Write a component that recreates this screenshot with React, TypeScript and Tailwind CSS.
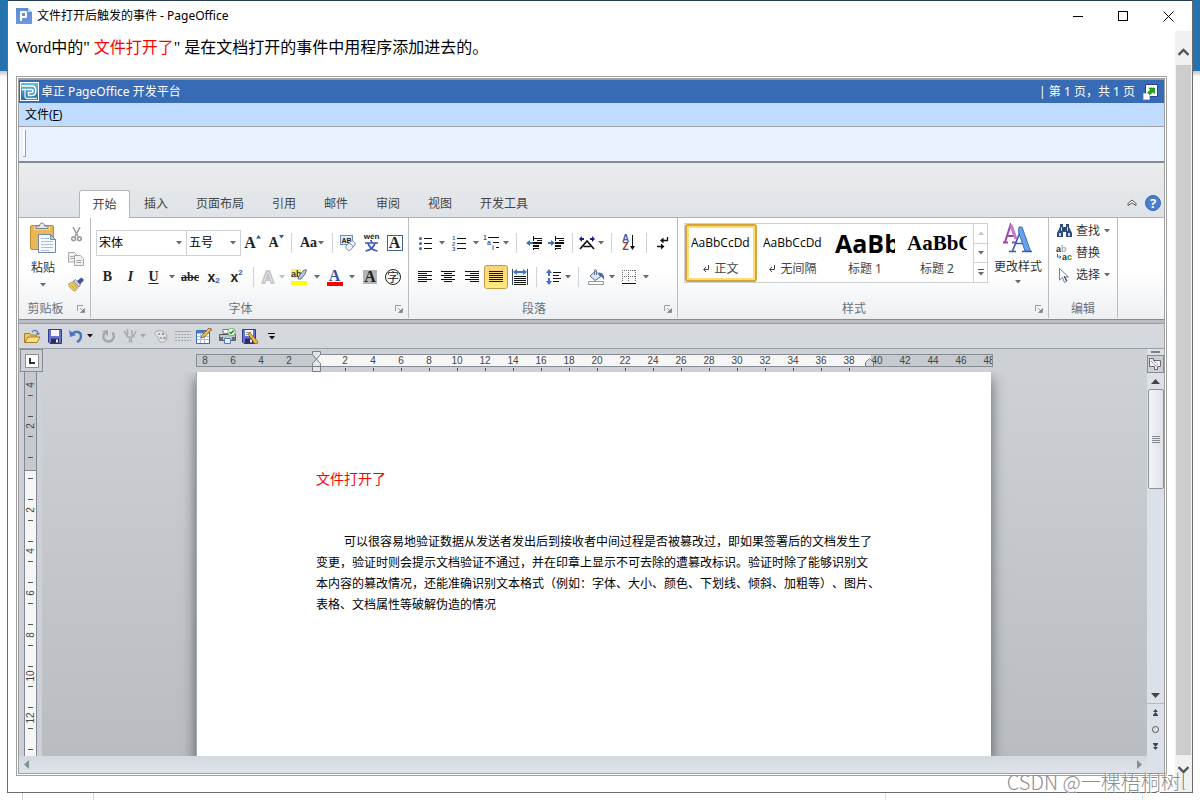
import type { ReactNode } from "react";

const ui = "font-['Noto_Sans','Noto_Sans_CJK_SC',sans-serif]";

/* ---------- small building blocks ---------- */

function Caret({ color = "#666a70" }: { color?: string }) {
  return (
    <svg width="6" height="4" viewBox="0 0 6 4" aria-hidden="true" className="shrink-0">
      <path d="M0 0h6L3 3.5z" fill={color} />
    </svg>
  );
}

function Tool({ label, w, children, className = "" }: { label: string; w: string; children: ReactNode; className?: string }) {
  return (
    <button type="button" aria-label={label} className={`flex h-6 shrink-0 items-center justify-center text-[#222] ${w} ${className}`}>
      {children}
    </button>
  );
}

function Drop({ label, w, color }: { label: string; w: string; color?: string }) {
  return (
    <Tool label={label} w={w}>
      <Caret color={color} />
    </Tool>
  );
}

function Sep({ w }: { w: string }) {
  return (
    <span className={`flex shrink-0 justify-center ${w}`}>
      <span className="h-5 w-px bg-[#cfd2d6]" />
    </span>
  );
}

function Group({ title, w, launcher = true, children }: { title: string; w: string; launcher?: boolean; children: ReactNode }) {
  return (
    <section aria-label={title} className={`flex shrink-0 flex-col border-r border-[#b9bdc2] ${w}`}>
      <div className="flex-1">{children}</div>
      <div className="flex h-[18px] items-center text-xs text-[#6b717c]">
        <span className="flex-1 text-center leading-[18px]">{title}</span>
        {launcher && (
          <button type="button" aria-label={`${title}设置`} className="flex w-[18px] justify-center">
            <svg width="8" height="8" viewBox="0 0 8 8">
              <path d="M.5 6V.5H6" fill="none" stroke="#9a9ea4" />
              <path d="M3 3l2.5 2.5M7.5 3.5v4h-4z" fill="#85898f" stroke="#85898f" strokeWidth=".8" />
            </svg>
          </button>
        )}
      </div>
    </section>
  );
}

/* ---------- icons ---------- */

const AppIcon = () => (
  <svg width="16" height="16" viewBox="0 0 16 16" className="shrink-0">
    <defs>
      <linearGradient id="app" x2="0" y2="1">
        <stop stopColor="#5b8fd0" />
        <stop offset="1" stopColor="#6e96df" />
      </linearGradient>
    </defs>
    <path d="M0 0h12l4 4v12H0z" fill="url(#app)" />
    <path d="M12 0v4h4z" fill="#c5d8f2" />
    <path d="M5 13V4h5v5H5" fill="none" stroke="#fff" strokeWidth="2" strokeLinejoin="round" />
  </svg>
);

const Logo = () => (
  <svg width="19" height="19" viewBox="0 0 19 19" className="shrink-0">
    <defs>
      <linearGradient id="logo" x2="0" y2="1">
        <stop stopColor="#6cc0dc" />
        <stop offset="1" stopColor="#1a6ba5" />
      </linearGradient>
    </defs>
    <path fill="#fff" d="M0 0h19v19H0z" />
    <path fill="url(#logo)" d="M1 1h17v17H1z" />
    <path d="M1.500 4h10.500c5 0 5 9.500 0 9.500H8.500V10.500H12c1.500 0 1.500-3 0-3H2" fill="none" stroke="#fff" strokeWidth="1.500" />
    <path d="M5 8v6c0 2 1 2.500 2.500 2.500H17" fill="none" stroke="#e2f2fa" strokeWidth="1.300" />
  </svg>
);

const Expand = () => (
  <svg width="15" height="16" viewBox="0 0 15 16">
    <path d="M2.500.500h12v12h-12z" fill="#fff" stroke="#2b3f9a" />
    <path d="M.500 9.500h6v6h-6z" fill="#fff" stroke="#c7c7c7" />
    <path d="M6 4h5.500v5.500L9.800 8 7 10.500 4.800 8.500 7.500 5.800z" fill="#12b012" stroke="#0a6d0a" strokeWidth=".6" />
  </svg>
);

const Paste = () => (
  <svg width="28" height="32" viewBox="0 0 28 32">
    <rect x="1.500" y="3.500" width="23" height="24" rx="1.500" fill="#e9b755" stroke="#c08a31" />
    <path d="M5 4h16v4H5z" fill="#f6d592" />
    <path d="M7 6.500V4h3.500c0-4 5-4 5 0H19v2.500z" fill="#e6e9ed" stroke="#777d86" />
    <path d="M9.500 12.500h12l5 5v13h-17z" fill="#f7fafe" stroke="#7187a8" />
    <path d="M21.500 12.500v5h5z" fill="#b9cbe4" stroke="#7187a8" />
    <path d="M12 16.500h8M12 19.500h12M12 22.500h12M12 25.500h12M12 28.500h8" stroke="#a9c0dd" />
  </svg>
);

const Cut = () => (
  <svg width="11" height="15" viewBox="0 0 11 15" fill="none" stroke="#9a9da1" strokeWidth="1.600">
    <path d="M2 0l5 9.500M9 0L4 9.500" />
    <circle cx="2.600" cy="11.800" r="1.900" />
    <circle cx="8.400" cy="11.800" r="1.900" />
  </svg>
);

const Copy = () => (
  <svg width="16" height="14" viewBox="0 0 16 14" fill="#f1f1f2" stroke="#a5a7aa">
    <path d="M.5.500h6l2.500 2.500v7H.500z" />
    <path d="M6.500 3.500h6l3 3v7h-9z" />
    <path d="M2 4.500h4M2 6.500h4M8.500 8.500h5M8.500 10.500h5" />
  </svg>
);

const Brush = () => (
  <svg width="16" height="15" viewBox="0 0 16 15">
    <path d="M.500 7l5.500-3 5 5-3.500 5C6 14.500 1 11 .500 7z" fill="#edc964" stroke="#a98837" strokeWidth=".7" />
    <path d="M3 8l4 4M5 6l4 5" stroke="#b4923c" strokeWidth=".8" />
    <path d="M5.500 4l2-1.500L12.500 8 11 10z" fill="#d6d9df" stroke="#666d7c" strokeWidth=".7" />
    <path d="M9 4l4.500-3.500L16 3l-4 4.500z" fill="#43509b" />
  </svg>
);

const Eraser = () => (
  <svg width="16" height="16" viewBox="0 0 16 16">
    <rect x=".5" y=".500" width="12" height="9" fill="#dfe9f7" stroke="#6d8fc0" />
    <text x="1.500" y="7.500" fontSize="7" fontWeight="700" fill="#222" fontFamily="Liberation Sans">AB</text>
    <path d="M6 11l5-5c1.500-1 5 1.500 4 4l-4.500 5c-2 1.500-6-1.500-4.500-4z" fill="#eef3fb" stroke="#7489ad" />
    <path d="M8.500 8.500c2.500 0 4 1.500 4.500 3.500" fill="none" stroke="#7489ad" />
  </svg>
);

const Pinyin = () => (
  <span className="flex flex-col items-center">
    <span className="font-['Liberation_Sans'] text-[8px] leading-[6px] font-bold">wén</span>
    <svg width="13" height="12" viewBox="0 0 13 12" fill="none" stroke="#3d55b8" strokeWidth="1.700">
      <path d="M5.500 0l1.500 2M0 3h13M3 3c1 4 4 7 9.500 8M10 3C9 7 6 10 .500 11" />
    </svg>
  </span>
);

const Highlight = () => (
  <svg width="16" height="16" viewBox="0 0 16 16">
    <path fill="#f3f36a" d="M0 0h10v9H0z" />
    <text x="0" y="7.500" fontSize="9" fontWeight="700" fill="#333" fontFamily="Liberation Sans">ab</text>
    <path d="M7 10l1-3 5-6h2.500L14 5l-4 5z" fill="#b8c9e4" stroke="#5d6f91" />
    <path fill="#ffff00" d="M0 12h16v4H0z" />
  </svg>
);

const ListIcon = ({ kind }: { kind: "dot" | "num" | "multi" }) => (
  <svg width="16" height="16" viewBox="0 0 16 16">
    {kind === "dot" && (
      <>
        <path d="M6 3.500h8M6 8.500h8M6 13.500h8" stroke="#111" />
        <g fill="#3a66ac">
          <circle cx="2.500" cy="3.500" r="1.500" />
          <circle cx="2.500" cy="8.500" r="1.500" />
          <circle cx="2.500" cy="13.500" r="1.500" />
        </g>
      </>
    )}
    {kind === "num" && (
      <>
        <path d="M6 3.500h9M6 8.500h9M6 13.500h9" stroke="#111" />
        <g fill="#3a66ac" fontSize="6" fontWeight="700" fontFamily="Liberation Sans">
          <text x="1" y="5">1</text>
          <text x="1" y="10.500">2</text>
          <text x="1" y="16">3</text>
        </g>
      </>
    )}
    {kind === "multi" && (
      <>
        <path d="M5 2.500h11M10 7.500h6M13 12.500h3" stroke="#111" />
        <g fill="#3a66ac" fontSize="7" fontWeight="700" fontFamily="Liberation Sans">
          <text x="0" y="5">1</text>
          <text x="4" y="10">a</text>
          <text x="9" y="15">i</text>
        </g>
      </>
    )}
  </svg>
);

const Indent = ({ out = false }: { out?: boolean }) => (
  <svg width="16" height="15" viewBox="0 0 16 15">
    <path d="M7 2.500h9M11 4.500h5M7 12.500h6" stroke="#111" />
    <path d="M7 7h9M7 10h6" stroke="#111" strokeWidth="2" />
    <path d="M7.500 0v15" stroke="#111" strokeDasharray="2 1" />
    {out ? <path d="M0 7l4-3v2h3v2H4v2z" fill="#3f72c4" /> : <path d="M7 7L3 4v2H0v2h3v2z" fill="#3f72c4" />}
  </svg>
);

const Scale = () => (
  <svg width="16" height="14" viewBox="0 0 16 14">
    <path d="M1 13L8 5l7 8M4.500 10.500h7" fill="none" stroke="#111" strokeWidth="1.700" />
    <path d="M0 3l3-3v2h2v2H3v2zM16 3l-3-3v2h-2v2h2v2z" fill="#1a1f86" />
  </svg>
);

const Sort = () => (
  <span className="flex items-center gap-px">
    <span className="flex flex-col items-center font-['Liberation_Sans'] text-[10px] leading-2 font-bold">
      <span className="text-[#3a5fa8]">A</span>
      <span className="text-[#943838]">Z</span>
    </span>
    <svg width="6" height="16" viewBox="0 0 6 16">
      <path d="M2.500 0v12" stroke="#111" />
      <path d="M0 11h5l-2.500 4z" fill="#111" />
    </svg>
  </span>
);

const Marks = () => (
  <svg width="12" height="14" viewBox="0 0 12 14" fill="none" stroke="#111">
    <path d="M10.500 1v3.500H5M0 10.500h5" strokeWidth="1.300" />
    <path d="M6.500 1.500L3 4.500 6.500 7.500zM4 7.500l3.500 3L4 13.500z" fill="#111" stroke="none" />
  </svg>
);

const alignPaths = {
  left: "M0 1.500h14M0 3.500h9M0 5.500h14M0 7.500h9M0 9.500h14M0 11.500h9",
  center: "M0 1.500h14M3 3.500h8M0 5.500h14M3 7.500h8M0 9.500h14M3 11.500h8",
  right: "M0 1.500h14M5 3.500h9M0 5.500h14M5 7.500h9M0 9.500h14M5 11.500h9",
  full: "M0 1.500h14M0 3.500h14M0 5.500h14M0 7.500h14M0 9.500h14M0 11.500h14",
};

const Align = ({ kind }: { kind: keyof typeof alignPaths }) => (
  <svg width="14" height="14" viewBox="0 0 14 14">
    <path d={alignPaths[kind]} stroke="#111" />
  </svg>
);

const Distribute = () => (
  <svg width="16" height="16" viewBox="0 0 16 16">
    <path d="M.5 0v16M15.500 0v16" stroke="#3a4a66" />
    <path d="M1 3l4-3v2h6V0l4 3-4 3V4H5v2z" fill="#3f72c4" />
    <path d="M2 7.500h12M2 9.500h12M2 11.500h12M2 13.500h12M2 15.500h12" stroke="#111" />
  </svg>
);

const Spacing = () => (
  <svg width="16" height="16" viewBox="0 0 16 16">
    <path d="M3 0l3 4H4v8h2l-3 4-3-4h2V4H0z" fill="#3f72c4" />
    <path d="M0 7h6v2H0z" fill="#fff" />
    <path d="M7 3.500h8M7 6.500h6M7 9.500h8M7 12.500h6" stroke="#111" />
  </svg>
);

const Bucket = () => (
  <svg width="16" height="16" viewBox="0 0 16 16">
    <path d="M2 7l5.500-5L13 7.500 7 11.500z" fill="#dbe6f5" stroke="#5d7396" />
    <path d="M6.500 6V1.500c0-1.500 2-1.500 2 .500v4" fill="none" stroke="#5d7396" />
    <path d="M10.500 3.500C15 3.500 17 7 15.500 11c-1-3-2-4-4-4z" fill="#3c66b0" />
    <path d="M.5 12.500h15v3H.500z" fill="#fff" stroke="#999" />
  </svg>
);

const Borders = () => (
  <svg width="14" height="14" viewBox="0 0 14 14">
    <path d="M0 .500h14M.500 0v12M13.500 0v12M6.500 0v12M0 6.500h14" fill="none" stroke="#666" strokeDasharray="1 1" />
    <path d="M0 13.500h14" stroke="#111" />
  </svg>
);

const BigA = () => (
  <svg width="30" height="30" viewBox="0 0 30 30">
    <path d="M0 19.500h5M9 19.500h5M2 19L7.500 2 12 14M4 13h7" fill="none" stroke="#a045a8" strokeWidth="2" />
    <path d="M8 2l5 14" stroke="#c77acb" strokeWidth="3" />
    <path d="M6 28.500h7M19 28.500h10M9.500 28L18 7M12.500 20.500h10" fill="none" stroke="#2f62ad" strokeWidth="1.600" />
    <path d="M16 4h3l8.500 24h-5.500L15.500 9z" fill="#6aa2e8" stroke="#2f62ad" strokeWidth=".9" />
  </svg>
);

const Find = () => (
  <svg width="15" height="14" viewBox="0 0 15 14">
    <path d="M3 0h3v3h3V0h3v3l3 6v4H9V8H6v5H0V9l3-6z" fill="#2d4a7c" />
    <path d="M2 9h2v3H2zM11 9h2v3h-2zM4 3h1v4H4zM10 3h1v4h-1z" fill="#c8d8f0" />
  </svg>
);

const Replace = () => (
  <svg width="16" height="16" viewBox="0 0 16 16" fontFamily="Liberation Sans" fontWeight="700" fontSize="9">
    <text x="0" y="7" fill="#333">a</text>
    <text x="5" y="7" fill="#aaa">b</text>
    <text x="6" y="15" fill="#333">a</text>
    <text x="11" y="15" fill="#248a24">c</text>
    <path d="M1.500 9v3H5M3.500 10.500L5 12l-1.500 1.500" fill="none" stroke="#3b66b5" />
  </svg>
);

const Pointer = () => (
  <svg width="10" height="15" viewBox="0 0 10 15">
    <path d="M.5.500v11.500l3-2.500 2 5 2-1-2-4.500h4z" fill="#fff" stroke="#6181b4" />
    <path d="M5 8l3 5" stroke="#30353d" />
  </svg>
);

const Open = () => (
  <svg width="17" height="15" viewBox="0 0 17 15">
    <path d="M.5 13.500V4.500h5l1 1.500h6v7.500z" fill="#f0c75a" stroke="#a67c24" />
    <path d="M1 13.500L4 8h12l-3 5.500z" fill="#ffe08a" stroke="#a67c24" />
    <path d="M8 3c2-2.500 5-2 6 1" fill="none" stroke="#4d7abc" strokeWidth="1.300" />
    <path d="M12 4h4l-2 2.500z" fill="#4d7abc" />
  </svg>
);

const Floppy = ({ pen = false }: { pen?: boolean }) => (
  <svg width="17" height="15" viewBox="0 0 17 15">
    <path d="M1.500 .500h13v14H3l-1.500-1.500z" fill="#6a74cc" stroke="#34398c" />
    <path d="M4 1h8v6H4z" fill="#f4f7fd" />
    <path d="M4 9.500h8v5H4z" fill="#2a2e58" />
    <path d="M9 10.500h2v3H9z" fill="#eef" />
    {pen && (
      <>
        <path d="M5 3.500h5M5 5.500h4" stroke="#999" />
        <path d="M7 5l2-1 7.500 8v2.500l-2.500 .500z" fill="#f0b73c" stroke="#80571c" strokeWidth=".7" />
      </>
    )}
  </svg>
);

const Undo = () => (
  <svg width="14" height="14" viewBox="0 0 14 14">
    <path d="M3 5c4-4 9-2 9 2 0 3-2 5-4 6" fill="none" stroke="#4675c4" strokeWidth="2.400" />
    <path d="M0 1l1 7 6-2z" fill="#4675c4" />
  </svg>
);

const Redo = () => (
  <svg width="13" height="13" viewBox="0 0 13 13">
    <path d="M2.500 3c-2.500 4-.5 8.500 4 8.500s7-5 4-9" fill="none" stroke="#a3a6aa" strokeWidth="2.400" />
    <path d="M6 0v6L0 1z" fill="#a3a6aa" />
  </svg>
);

const Brushes = () => (
  <svg width="14" height="14" viewBox="0 0 14 14" fill="none" stroke="#a8abaf" strokeWidth="1.600">
    <path d="M1 2l4 6M4.500 0v6M9 1v6M13 2l-3 6" />
    <path d="M3.500 8h3v5.500M8.500 13.500V8h3" fill="#e9e9ea" />
  </svg>
);

const Palette = () => (
  <svg width="14" height="13" viewBox="0 0 14 13">
    <path d="M1 2c5-3 12-1 12 5s-7 6-8 4 1-3-1-4-4-3-3-5z" fill="#e3e3e4" stroke="#a9a9ab" />
    <g fill="#909296">
      <circle cx="5" cy="4" r="1" />
      <circle cx="9" cy="4" r="1.200" />
      <circle cx="10.500" cy="8" r="1.200" />
      <circle cx="7" cy="8" r="1" />
    </g>
  </svg>
);

const Dashes = () => (
  <svg width="16" height="12" viewBox="0 0 16 12">
    <path d="M0 1.500h16" stroke="#a5a8ad" />
    <path d="M0 4.500h16M0 7.500h16M0 10.500h16" stroke="#a5a8ad" strokeDasharray="2 1" />
  </svg>
);

const TablePen = () => (
  <svg width="17" height="16" viewBox="0 0 17 16">
    <path d="M.5 2.500h13v13H.500z" fill="#fff" stroke="#3f6cb0" />
    <path fill="#4d7cc4" d="M1 3h12v2.500H1z" />
    <path d="M1 8.500h12M1 11.500h12M4.500 5v10M8.500 5v10" stroke="#a6bfe2" />
    <path d="M5 10l1-3 7-7 2.500 2L8.500 9z" fill="#e8b64f" stroke="#7b5a22" strokeWidth=".8" />
    <path d="M13 0l2.500 2 .5-1-1.500-1z" fill="#c65a50" />
  </svg>
);

const Printer = () => (
  <svg width="17" height="16" viewBox="0 0 17 16">
    <path d="M4 5.500V1.500h8v4z" fill="#fff" stroke="#777" />
    <path d="M.500 6.500h16v6H.500z" fill="#c0c4c9" stroke="#5d6167" />
    <path d="M1 9h3v3H1zM13 9h3v3h-3z" fill="#6a6f75" />
    <path d="M5.500 10.500h6v5h-6z" fill="#e9f3ff" stroke="#4e7fbb" />
    <circle cx="12.500" cy="4" r="3.800" fill="#e8f5e6" stroke="#5f9c5c" strokeWidth=".8" />
    <path d="M10.500 4l1.500 1.500L14.500 2.500" fill="none" stroke="#259025" strokeWidth="1.500" />
  </svg>
);

/* ---------- ribbon ---------- */

const tabs = ["插入", "页面布局", "引用", "邮件", "审阅", "视图", "开发工具"];

function Combo({ label, value, w }: { label: string; value: string; w: string }) {
  return (
    <span className={`relative flex h-[26px] shrink-0 items-center border border-[#cdd0d4] bg-white ${w}`}>
      <select aria-label={label} defaultValue={value} className="h-full w-full appearance-none bg-transparent pl-0.5 text-xs text-black outline-none">
        <option>{value}</option>
      </select>
      <span className="pointer-events-none absolute right-1">
        <Caret />
      </span>
    </span>
  );
}

function ClipboardGroup() {
  return (
    <Group title="剪贴板" w="w-[72px]">
      <div className="flex">
        <button type="button" className="flex w-12 flex-col items-center pt-1 text-xs text-[#333]">
          <Paste />
          <span className="mt-[5px] leading-[18px]">粘贴</span>
          <span className="mt-1.5">
            <Caret />
          </span>
        </button>
        <div className="flex w-[18px] flex-col items-center gap-px pt-1">
          <Tool label="剪切" w="w-4">
            <Cut />
          </Tool>
          <Tool label="复制" w="w-4">
            <Copy />
          </Tool>
          <Tool label="格式刷" w="w-4">
            <Brush />
          </Tool>
        </div>
      </div>
    </Group>
  );
}

function FontGroup() {
  return (
    <Group title="字体" w="w-[318px]">
      <div className="mt-3 flex h-[26px] items-center pl-[5px] font-['Liberation_Serif'] font-bold">
        <span className={`flex font-normal ${ui}`}>
          <Combo label="字体" value="宋体" w="w-[91px]" />
          <Combo label="字号" value="五号" w="-ml-px w-[55px]" />
        </span>
        <Tool label="增大字体" w="w-[23px]">
          <span className="text-base leading-6">A</span>
          <svg width="5" height="16" viewBox="0 0 5 16"><path d="M0 3.500h5L2.500 0z" fill="#31599c" /></svg>
        </Tool>
        <Tool label="缩小字体" w="w-6">
          <span className="text-sm leading-6">A</span>
          <svg width="5" height="16" viewBox="0 0 5 16"><path d="M0 0h5L2.500 3.500z" fill="#31599c" /></svg>
        </Tool>
        <Sep w="w-[7px]" />
        <Tool label="更改大小写" w="w-[34px]" className="gap-px text-sm">
          Aa
          <Caret />
        </Tool>
        <Sep w="w-[7px]" />
        <Tool label="清除格式" w="w-6">
          <Eraser />
        </Tool>
        <Tool label="拼音指南" w="w-[23px]">
          <Pinyin />
        </Tool>
        <Tool label="字符边框" w="w-[23px]">
          <span className="h-4 w-4 border border-[#43618f] text-center text-base leading-[14px]">A</span>
        </Tool>
      </div>
      <div className="mt-[9px] flex items-center pl-[5px] font-['Liberation_Serif'] text-sm font-bold">
        <Tool label="加粗" w="w-[23px]">B</Tool>
        <Tool label="倾斜" w="w-[23px]" className="italic">I</Tool>
        <Tool label="下划线" w="w-[23px]">
          <span className="underline underline-offset-2">U</span>
        </Tool>
        <Drop label="下划线样式" w="w-[13px]" />
        <Tool label="删除线" w="w-6" className="text-xs line-through">abc</Tool>
        <Tool label="下标" w="w-[23px]" className="font-['Liberation_Sans']">
          x<span className="mt-2 text-[8px] text-[#31599c]">2</span>
        </Tool>
        <Tool label="上标" w="w-[23px]" className="font-['Liberation_Sans']">
          x<span className="mb-2 text-[8px] text-[#31599c]">2</span>
        </Tool>
        <Sep w="w-2.5" />
        <Tool label="文本效果" w="w-5">
          <svg width="18" height="18" viewBox="0 0 18 18">
            <text x="9" y="15" textAnchor="middle" fontSize="17" fontFamily="Liberation Sans" fill="#fff" stroke="#c3c3c8" strokeWidth="1.500">A</text>
          </svg>
        </Tool>
        <Drop label="文本效果选项" w="w-2" color="#bcbec2" />
        <Tool label="突出显示" w="w-[26px]">
          <Highlight />
        </Tool>
        <Drop label="突出显示颜色" w="w-[9px]" />
        <Tool label="字体颜色" w="w-[27px]">
          <span className="w-4 border-b-4 border-[#fe0000] text-center text-base leading-[13px] text-[#31599c]">A</span>
        </Tool>
        <Drop label="选择字体颜色" w="w-2" />
        <Tool label="字符底纹" w="w-7">
          <span className="h-3.5 w-3.5 bg-[#b5b5b5] text-center text-base leading-[14px]">A</span>
        </Tool>
        <Tool label="带圈字符" w="w-[18px]">
          <span className="h-4 w-4 rounded-full border border-[#222] text-center font-['Noto_Sans_CJK_SC'] text-xs leading-[14px] font-normal">字</span>
        </Tool>
      </div>
    </Group>
  );
}

function ParagraphGroup() {
  return (
    <Group title="段落" w="w-[269px]">
      <div className="mt-3 flex h-[26px] items-center pl-[5px]">
        <Tool label="项目符号" w="w-6"><ListIcon kind="dot" /></Tool>
        <Drop label="项目符号库" w="w-2" />
        <Tool label="编号" w="w-[26px]"><ListIcon kind="num" /></Tool>
        <Drop label="编号库" w="w-2" />
        <Tool label="多级列表" w="w-[22px]"><ListIcon kind="multi" /></Tool>
        <Drop label="列表库" w="w-2" />
        <Sep w="w-[13px]" />
        <Tool label="减少缩进量" w="w-[22px]"><Indent out /></Tool>
        <Tool label="增加缩进量" w="w-[22px]"><Indent /></Tool>
        <Sep w="w-2.5" />
        <Tool label="中文版式" w="w-5"><Scale /></Tool>
        <Drop label="中文版式选项" w="w-2" />
        <Sep w="w-[13px]" />
        <Tool label="排序" w="w-[22px]"><Sort /></Tool>
        <Sep w="w-3" />
        <Tool label="编辑标记" w="w-[22px]"><Marks /></Tool>
      </div>
      <div className="mt-[9px] flex items-center pl-[5px]">
        <Tool label="左对齐" w="w-[22px]"><Align kind="left" /></Tool>
        <Tool label="居中" w="w-6"><Align kind="center" /></Tool>
        <Tool label="右对齐" w="w-6"><Align kind="right" /></Tool>
        <Tool label="两端对齐" w="w-6" className="rounded-[3px] border border-[#c29b45] bg-gradient-to-b from-[#fcd378] to-[#ffea7d]"><Align kind="full" /></Tool>
        <Tool label="分散对齐" w="w-6"><Distribute /></Tool>
        <Sep w="w-2" />
        <Tool label="行距" w="w-5" className="ml-1"><Spacing /></Tool>
        <Drop label="行距选项" w="w-2" />
        <Sep w="w-3" />
        <Tool label="底纹" w="w-6"><Bucket /></Tool>
        <Drop label="底纹颜色" w="w-2" />
        <Tool label="边框" w="w-[26px]"><Borders /></Tool>
        <Drop label="边框选项" w="w-2" />
      </div>
    </Group>
  );
}

const styles = [
  { name: "正文", mark: true, sample: "AaBbCcDd", look: "text-xs font-['Open_Sans']" },
  { name: "无间隔", mark: true, sample: "AaBbCcDd", look: "text-xs font-['Open_Sans']" },
  { name: "标题 1", mark: false, sample: "AaBb", look: "text-[25px] font-bold font-['Open_Sans']" },
  { name: "标题 2", mark: false, sample: "AaBbC", look: "text-[21px] font-bold font-['Liberation_Serif']" },
];

function StylesGroup() {
  return (
    <Group title="样式" w="w-[371px]">
      <div className="flex pt-[5px] pl-1.5">
        <div className="flex h-[60px] border border-[#cdd0d4] bg-white">
          {styles.map((s, i) => (
            <button
              key={s.name}
              type="button"
              aria-pressed={i === 0}
              className={`flex w-[72px] flex-col items-center text-xs text-[#444] ${
                i === 0 ? "rounded-[3px] border-2 border-[#d8a33a] outline-2 -outline-offset-4 outline-[#ffdd75]" : "border-2 border-transparent"
              }`}
            >
              <span className={`flex h-[34px] w-[60px] items-center overflow-hidden leading-8 text-black ${s.look}`}>{s.sample}</span>
              <span className="flex items-center gap-1 leading-[18px] whitespace-nowrap">
                {s.mark && (
                  <svg width="7" height="8" viewBox="0 0 7 8">
                    <path d="M5.500 0v4.500H1M3 2L.700 4.500 3 7" fill="none" stroke="#444" />
                  </svg>
                )}
                {s.name}
              </span>
            </button>
          ))}
          <div className="flex w-3.5 flex-col divide-y divide-[#cdd0d4] border-l border-[#cdd0d4]">
            <button type="button" aria-label="上一行" className="flex flex-1 items-center justify-center">
              <svg width="6" height="4" viewBox="0 0 6 4"><path d="M0 4h6L3 .500z" fill="#c4c6c9" /></svg>
            </button>
            <button type="button" aria-label="下一行" className="flex flex-1 items-center justify-center">
              <Caret />
            </button>
            <button type="button" aria-label="其他" className="flex flex-1 flex-col items-center justify-center gap-0.5">
              <span className="h-px w-1.5 bg-[#555]" />
              <Caret />
            </button>
          </div>
        </div>
        <button type="button" className="ml-0.5 flex w-14 flex-col items-center text-xs whitespace-nowrap text-[#333]">
          <BigA />
          <span className="mt-[5px] leading-[18px]">更改样式</span>
          <span className="mt-1">
            <Caret />
          </span>
        </button>
      </div>
    </Group>
  );
}

const edits = [
  { name: "查找", icon: <Find />, drop: true },
  { name: "替换", icon: <Replace />, drop: false },
  { name: "选择", icon: <Pointer />, drop: true },
];

function EditGroup() {
  return (
    <Group title="编辑" w="w-[69px]" launcher={false}>
      <div className="flex flex-col pt-0.5 pl-[7px]">
        {edits.map((e) => (
          <button key={e.name} type="button" className="flex h-[22px] items-center text-xs text-[#333]">
            <span className="flex w-[18px] justify-center pr-0.5">{e.icon}</span>
            <span className="mr-1 ml-0.5">{e.name}</span>
            {e.drop && <Caret />}
          </button>
        ))}
      </div>
    </Group>
  );
}

function Ribbon() {
  return (
    <>
      <div className="flex h-[55px] shrink-0 items-end border-b border-[#adb1b7] bg-gradient-to-b from-[#ebecee] to-[#dfe3e7] pl-[60px] text-xs text-[#444]">
        <nav className="-mb-px flex h-7">
          <button type="button" className="w-[51px] rounded-t-[3px] border border-b-0 border-[#b2b6bb] bg-white">开始</button>
          {tabs.map((t) => (
            <button key={t} type="button" className="px-3.5">{t}</button>
          ))}
        </nav>
        <div className="ml-auto flex h-7 items-center gap-2 pr-[3px]">
          <button type="button" aria-label="最小化功能区">
            <svg width="10" height="8" viewBox="0 0 10 8">
              <path d="M1 4.500L5 1l4 3.500v2L5 4 1 6.500z" fill="#fff" stroke="#555" />
            </svg>
          </button>
          <button type="button" aria-label="帮助" className="h-4 w-4 rounded-full border border-[#3a66b5] bg-[#4a7dcb] text-[13px] leading-[14px] font-bold text-white">?</button>
        </div>
      </div>
      <div className="flex h-[101px] shrink-0 overflow-hidden bg-gradient-to-b from-white via-white to-[#edeff1] pb-px">
        <ClipboardGroup />
        <FontGroup />
        <ParagraphGroup />
        <StylesGroup />
        <EditGroup />
      </div>
      <div className="h-[5px] shrink-0 border-y border-t-[#858a91] border-b-[#969da6] bg-[#b9bdc3]" />
    </>
  );
}

function QuickAccess() {
  return (
    <div className="flex h-[25px] shrink-0 items-center border-b border-[#989fa9] bg-[#d4d8dd] pl-0.5">
      <Tool label="打开" w="w-[23px]"><Open /></Tool>
      <Tool label="保存" w="w-[23px]"><Floppy /></Tool>
      <Tool label="撤消" w="w-[18px]"><Undo /></Tool>
      <Drop label="撤消列表" w="w-2.5" color="#111" />
      <Tool label="重复" w="w-[27px]"><Redo /></Tool>
      <Tool label="画笔" w="w-4"><Brushes /></Tool>
      <Drop label="画笔选项" w="w-2.5" color="#a3a6aa" />
      <Tool label="主题颜色" w="w-[26px]"><Palette /></Tool>
      <Tool label="虚框" w="w-[18px]"><Dashes /></Tool>
      <Tool label="绘制表格" w="w-[25px]"><TablePen /></Tool>
      <Tool label="打印" w="w-[21px]"><Printer /></Tool>
      <Tool label="另存为" w="w-[23px]"><Floppy pen /></Tool>
      <Tool label="自定义快速访问工具栏" w="w-[21px]" className="flex-col gap-0.5">
        <span className="h-px w-[7px] bg-black" />
        <Caret color="#111" />
      </Tool>
    </div>
  );
}

/* ---------- document area ---------- */

const hMarks = Array.from({ length: 29 }, (_, i) => i * 2 - 8);
const vMarks = Array.from({ length: 9 }, (_, i) => i * 2 - 4);

function HorizontalRuler() {
  return (
    <div className="flex h-[23px] shrink-0 bg-[#cdd0d5] pr-px">
      <button type="button" aria-label="制表符" className="ml-px flex h-[23px] w-[23px] items-center justify-center border border-[#868c94]">
        <span className="flex h-3.5 w-3.5 items-center justify-center border border-[#8a9099] bg-white">
          <span className="h-1.5 w-1.5 border-b-2 border-l-2 border-[#333]" />
        </span>
      </button>
      <div className="flex flex-1 justify-center">
        <div className="relative h-full w-[797px] pt-[5px]">
          <div className="flex h-[13px] overflow-hidden border border-[#868c94] bg-[linear-gradient(90deg,#c6cacf_120px,#f6f6f6_120px,#f6f6f6_674px,#c6cacf_674px)] font-['Liberation_Sans'] text-[10px] leading-[11px] text-[#444]">
            {hMarks.map((n) => (
              <span key={n} className="w-7 shrink-0 -translate-x-1.5 text-center">{n === 0 ? "" : Math.abs(n)}</span>
            ))}
          </div>
          <div className="flex h-[5px] overflow-hidden pl-[135px]">
            {hMarks.slice(5, 24).map((n) => (
              <span key={n} className="flex w-7 shrink-0 justify-center pt-px">
                <span className="h-[3px] w-px bg-[#555]" />
              </span>
            ))}
          </div>
          <svg width="10" height="22" viewBox="0 0 10 22" className="absolute top-0.5 left-[116px]" fill="#e3e5e8" stroke="#7a7f87">
            <path d="M.500.500h8v3l-4 4.500-4-4.500zM4.500 8l4 4.500v3h-8v-3zM.500 15.500h8v5h-8z" />
          </svg>
          <svg width="9" height="10" viewBox="0 0 9 10" className="absolute top-[9px] left-[669px]" fill="#d5d7da" stroke="#7a7f87">
            <path d="M4.500.500l4 4v4h-8v-4z" />
          </svg>
        </div>
      </div>
    </div>
  );
}

function VerticalRuler() {
  return (
    <div className="w-[23px] shrink-0 overflow-hidden bg-[#cdd0d5] pl-[5px]">
      <div className="flow-root h-full w-[13px] border-x border-[#7f8994] bg-[linear-gradient(#c6cacf_98px,#7f8994_98px,#7f8994_99px,#f6f6f6_99px)]">
        <div className="-mt-2 grid h-[375px] grid-rows-9 font-['Liberation_Sans'] text-[10px] text-[#444]">
          {vMarks.map((n) => (
            <span key={n} className="flex flex-col items-center justify-between py-2.5">
              <span className={`h-px w-[5px] ${n === -4 ? "bg-transparent" : "bg-[#555]"}`} />
              <span className="-rotate-90 leading-3">{n === 0 ? "" : Math.abs(n)}</span>
              <span className="h-px w-[5px] bg-[#555]" />
            </span>
          ))}
        </div>
        <div className="mt-2.5 ml-[3px] h-px w-[5px] bg-[#555]" />
      </div>
    </div>
  );
}

function Page() {
  return (
    <div className="flex min-w-0 flex-1 justify-center overflow-hidden bg-gradient-to-b from-[#cdd0d5] to-[#b9bcc0] pr-0.5">
      <article className="w-[795px] shrink-0 border-l border-[#a3a9b3] bg-white pt-[95px] pr-[100px] pl-[119px] font-['Noto_Sans_CJK_SC',sans-serif] text-xs leading-[21px] text-black shadow-[0_8px_12px_1px_rgba(60,65,72,0.7)]">
        <h1 className="text-sm leading-[22px] text-[#f00]">文件打开了</h1>
        <p className="mt-[41px] indent-7 whitespace-nowrap">
          可以很容易地验证数据从发送者发出后到接收者中间过程是否被篡改过，即如果签署后的文档发生了
          <br />
          变更，验证时则会提示文档验证不通过，并在印章上显示不可去除的遭篡改标识。验证时除了能够识别文
          <br />
          本内容的篡改情况，还能准确识别文本格式（例如：字体、大小、颜色、下划线、倾斜、加粗等）、图片、
          <br />
          表格、文档属性等破解伪造的情况
        </p>
      </article>
    </div>
  );
}

function DocScrollbar() {
  return (
    <div className="flex w-[17px] shrink-0 flex-col items-center bg-[#dce0e8] text-[#444]">
      <span className="mt-0.5 h-0.5 w-[9px] bg-[#7d828a]" />
      <button type="button" aria-label="标尺" className="mt-0.5 flex h-[18px] w-[17px] items-center justify-center border border-[#868c94] bg-[#cdd0d5]">
        <svg width="13" height="12" viewBox="0 0 13 12" fill="#f6edf0" stroke="#666b73">
          <path d="M.500.500h4v2h7v6h-3v3h-3v-3h-5z" />
          <path d="M2 3l6 6M5 3l4 4" strokeDasharray="1 1" />
        </svg>
      </button>
      <button type="button" aria-label="向上" className="flex h-4 items-center">
        <svg width="9" height="5" viewBox="0 0 9 5"><path d="M0 5h9L4.500 0z" fill="#444" /></svg>
      </button>
      <div className="flex h-[100px] w-4 flex-col items-center justify-center gap-px rounded-[2px] border border-[#8c929c] bg-gradient-to-r from-[#f2f4f7] to-[#dfe2e8]">
        <span className="h-px w-2 bg-[#868c94]" />
        <span className="h-px w-2 bg-[#868c94]" />
        <span className="h-px w-2 bg-[#868c94]" />
        <span className="h-px w-2 bg-[#868c94]" />
      </div>
      <div className="flex-1" />
      <button type="button" aria-label="向下" className="flex h-4 w-full items-center justify-center border-b border-[#b4b9c2]">
        <svg width="9" height="5" viewBox="0 0 9 5"><path d="M0 0h9L4.500 5z" fill="#444" /></svg>
      </button>
      <button type="button" aria-label="前一页" className="flex h-[17px] items-center">
        <svg width="7" height="7" viewBox="0 0 7 7"><path d="M3.500 0L6 3H1zM3.500 3L6 6H1zM1 6h5v1H1z" fill="#444" /></svg>
      </button>
      <button type="button" aria-label="选择浏览对象" className="flex h-[17px] items-center">
        <span className="h-[7px] w-[7px] rounded-full border border-[#555]" />
      </button>
      <button type="button" aria-label="下一页" className="mb-[18px] flex h-[17px] items-center">
        <svg width="7" height="7" viewBox="0 0 7 7"><path d="M1 0h5v1H1zM1 1h5L3.500 4zM1 4h5L3.500 7z" fill="#444" /></svg>
      </button>
    </div>
  );
}

function Editor() {
  return (
    <div className="flex min-h-0 flex-1 flex-col border border-[#a0a0a0] p-px">
      <div className="flex min-h-0 flex-1 flex-col border border-t-2 border-[#a0a0a0] text-xs">
        <header className="flex h-[23px] shrink-0 items-center bg-[#376bb5] pr-1.5 pl-px text-white">
          <Logo />
          <span className="ml-0.5">卓正 PageOffice 开发平台</span>
          <span className="mr-2 ml-auto">| 第 1 页，共 1 页</span>
          <button type="button" aria-label="全屏">
            <Expand />
          </button>
        </header>
        <div className="flex h-6 shrink-0 items-center border-b border-[#a0a0a0] bg-[#c0dcff] pl-1.5 text-black">
          <button type="button">
            文件(<span className="underline">F</span>)
          </button>
        </div>
        <div className="flex h-9 shrink-0 border-b-2 border-[#858a91] bg-[#eaf1ff] pt-[3px] pb-1 pl-1">
          <span className="w-[3px] border-r border-b border-[#a0a0a0] bg-white" />
        </div>
        <Ribbon />
        <QuickAccess />
        <div className="flex min-h-0 flex-1">
          <div className="flex min-w-0 flex-1 flex-col">
            <HorizontalRuler />
            <div className="flex min-h-0 flex-1">
              <VerticalRuler />
              <Page />
            </div>
            <div className="flex h-[17px] shrink-0 items-center justify-between bg-gradient-to-b from-[#d4d8df] to-[#dfe3eb] px-[5px]">
              <button type="button" aria-label="向左">
                <svg width="5" height="9" viewBox="0 0 5 9" className="block"><path d="M5 0v9L0 4.500z" fill="#829292" /></svg>
              </button>
              <button type="button" aria-label="向右">
                <svg width="5" height="9" viewBox="0 0 5 9" className="block"><path d="M0 0v9l5-4.500z" fill="#829292" /></svg>
              </button>
            </div>
          </div>
          <DocScrollbar />
        </div>
      </div>
    </div>
  );
}

/* ---------- window ---------- */

export default function App() {
  return (
    <div className={`relative flex h-screen flex-col overflow-hidden bg-[linear-gradient(#2472ae_71px,#c4c4c4_71px,#ffffff_77px)] px-[7px] [text-spacing-trim:space-all] ${ui}`}>
      <main className="flex min-h-0 flex-1 flex-col border border-[#6b6b6b] border-t-[#243b53] bg-white">
        <div className="flex h-[30px] shrink-0 items-center pl-2 text-xs text-black">
          <AppIcon />
          <span className="ml-[5px]">文件打开后触发的事件 - PageOffice</span>
          <div className="ml-auto flex h-full">
            <button type="button" aria-label="最小化" className="flex w-[45px] items-center justify-center">
              <span className="h-px w-2.5 bg-black" />
            </button>
            <button type="button" aria-label="最大化" className="flex w-[45px] items-center justify-center">
              <span className="h-2.5 w-2.5 border border-black" />
            </button>
            <button type="button" aria-label="关闭" className="flex w-[47px] items-center justify-center">
              <svg width="11" height="11" viewBox="0 0 11 11"><path d="M.5.500l10 10M10.500.500l-10 10" stroke="#000" /></svg>
            </button>
          </div>
        </div>
        <div className="flex min-h-0 flex-1">
          <div className="flex min-w-0 flex-1 flex-col px-2 pb-4">
            <p className="mt-[5px] mb-4 font-['Liberation_Serif','Noto_Sans_CJK_SC',serif] text-base leading-6 text-black">
              Word中的" <span className="text-[#f00]">文件打开了</span>" 是在文档打开的事件中用程序添加进去的。
            </p>
            <Editor />
          </div>
          <div className="flex w-[17px] shrink-0 flex-col bg-[#f0f0f0]">
            <button type="button" aria-label="向上滚动" className="flex h-[34px] items-center justify-center pt-2">
              <svg width="11" height="8" viewBox="0 0 11 8"><path d="M.500 7l5-5 5 5" fill="none" stroke="#555" strokeWidth="2.400" /></svg>
            </button>
            <div className="mx-px flex-1 bg-[#cdcdcd]" />
            <button type="button" aria-label="向下滚动" className="flex h-[37px] items-center justify-center pb-2">
              <svg width="11" height="8" viewBox="0 0 11 8"><path d="M.500 1l5 5 5-5" fill="none" stroke="#555" strokeWidth="2.400" /></svg>
            </button>
          </div>
        </div>
      </main>
      <div className="flex h-[7px] shrink-0 pr-[50px] pl-[15px]">
        <span className="w-[72px] border-x border-[#c5d5e4]" />
        <span className="ml-auto w-[258px] border-x border-[#d3dfe9]" />
      </div>
      <span className="absolute right-3.5 bottom-1 font-['Noto_Sans_CJK_SC',sans-serif] text-xl leading-7 font-light whitespace-nowrap text-[#8e8e8e] [text-shadow:1px_1px_0_#fff]">
        CSDN @一棵梧桐树l
      </span>
    </div>
  );
}
